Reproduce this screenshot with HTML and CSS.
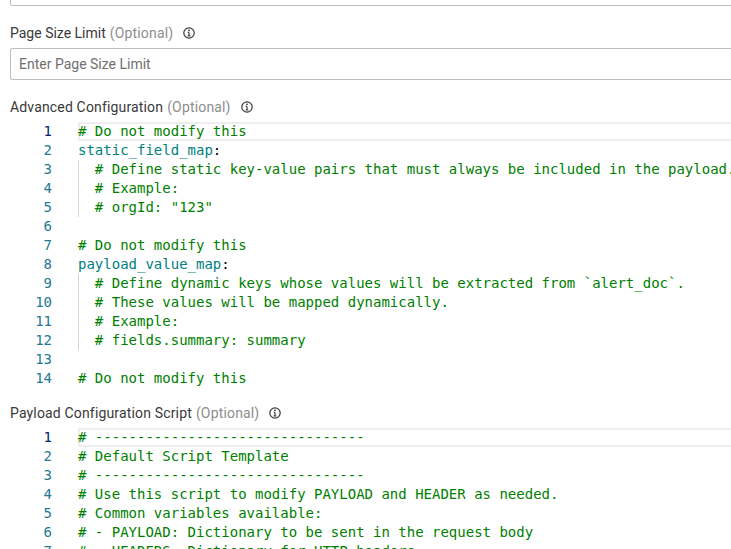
FILE: index.html
```html
<!DOCTYPE html>
<html>
  <head>
    <meta name="viewport" content="width=device-width, initial-scale=1">
    <link rel="stylesheet" href="styles.css">
  </head>
  <body>
    <form class="config_form">
      <div class="input input_cut"></div>

      <div class="label label_first">
        Page Size Limit <span class="optional">(Optional)</span>
        <svg class="info" viewBox="0 0 12 12"><circle cx="6" cy="6" r="5.2" /><path d="M6 5.4V9M4.6 9h2.8M4.8 5.4H6" /><circle class="dot" cx="6" cy="3.3" r=".9" /></svg>
      </div>
      <div class="input"><span class="placeholder">Enter Page Size Limit</span></div>

      <div class="label">
        Advanced Configuration <span class="optional">(Optional)</span>
        <svg class="info" viewBox="0 0 12 12"><circle cx="6" cy="6" r="5.2" /><path d="M6 5.4V9M4.6 9h2.8M4.8 5.4H6" /><circle class="dot" cx="6" cy="3.3" r=".9" /></svg>
      </div>
      <div class="editor">
        <div class="line active"><span class="num">1</span><span class="code"># Do not modify this</span></div>
        <div class="line"><span class="num">2</span><span class="code key">static_field_map<span class="colon">:</span></span></div>
        <div class="line"><span class="num">3</span><span class="code guide">  # Define static key-value pairs that must always be included in the payload.</span></div>
        <div class="line"><span class="num">4</span><span class="code guide">  # Example:</span></div>
        <div class="line"><span class="num">5</span><span class="code guide">  # orgId: "123"</span></div>
        <div class="line"><span class="num">6</span><span class="code"></span></div>
        <div class="line"><span class="num">7</span><span class="code"># Do not modify this</span></div>
        <div class="line"><span class="num">8</span><span class="code key">payload_value_map<span class="colon">:</span></span></div>
        <div class="line"><span class="num">9</span><span class="code guide">  # Define dynamic keys whose values will be extracted from `alert_doc`.</span></div>
        <div class="line"><span class="num">10</span><span class="code guide">  # These values will be mapped dynamically.</span></div>
        <div class="line"><span class="num">11</span><span class="code guide">  # Example:</span></div>
        <div class="line"><span class="num">12</span><span class="code guide">  # fields.summary: summary</span></div>
        <div class="line"><span class="num">13</span><span class="code"></span></div>
        <div class="line"><span class="num">14</span><span class="code"># Do not modify this</span></div>
      </div>

      <div class="label label_last">
        Payload Configuration Script <span class="optional">(Optional)</span>
        <svg class="info" viewBox="0 0 12 12"><circle cx="6" cy="6" r="5.2" /><path d="M6 5.4V9M4.6 9h2.8M4.8 5.4H6" /><circle class="dot" cx="6" cy="3.3" r=".9" /></svg>
      </div>
      <div class="editor">
        <div class="line active"><span class="num">1</span><span class="code"># --------------------------------</span></div>
        <div class="line"><span class="num">2</span><span class="code"># Default Script Template</span></div>
        <div class="line"><span class="num">3</span><span class="code"># --------------------------------</span></div>
        <div class="line"><span class="num">4</span><span class="code"># Use this script to modify PAYLOAD and HEADER as needed.</span></div>
        <div class="line"><span class="num">5</span><span class="code"># Common variables available:</span></div>
        <div class="line"><span class="num">6</span><span class="code"># - PAYLOAD: Dictionary to be sent in the request body</span></div>
        <div class="line"><span class="num">7</span><span class="code"># - HEADERS: Dictionary for HTTP headers</span></div>
      </div>
    </form>
  </body>
</html>
```

FILE: styles.css
```css
html, body { margin: 0; height: 549px; overflow: hidden; background-color: white }
.config_form { width: 780px; padding-left: 10px; font-family: "Roboto", "Liberation Sans", sans-serif; font-size: 14px; color: #393939 }

.input { height: 30px; border: 1px solid #bdbdbd; border-radius: 2px; display: flex; align-items: center; padding-left: 8px }
.input_cut { height: 5px; border-top: 0; border-radius: 0 0 2px 2px }
.placeholder { color: #6f6f6f }

.label { height: 20px; margin-top: 17px; margin-bottom: 5px; display: flex; align-items: center; gap: 4px; line-height: 20px; letter-spacing: .16px }
.label_first { letter-spacing: 0 }
.label_last { margin-top: 15px }
.optional { color: #8d8d8d; letter-spacing: .16px }
.info { width: 12px; height: 12px; margin-left: 6px; fill: none; stroke: #393939; stroke-width: 1.2 }
.info .dot { fill: #393939; stroke: none }

.editor { font-family: "DejaVu Sans Mono", monospace; font-size: 14px; line-height: 19px }
.line { display: flex; height: 19px }
.num { width: 42px; flex: none; text-align: right; color: #237893 }
.code { flex: 1; margin-left: 26px; white-space: pre; color: #008000 }
.key { color: #008080 }
.colon { color: #000000 }
.guide { box-shadow: inset 1px 0 0 #d3d3d3 }
.active .num { color: #0b216f }
.active .code { box-shadow: inset 0 0 0 2px #eeeeee }
```
